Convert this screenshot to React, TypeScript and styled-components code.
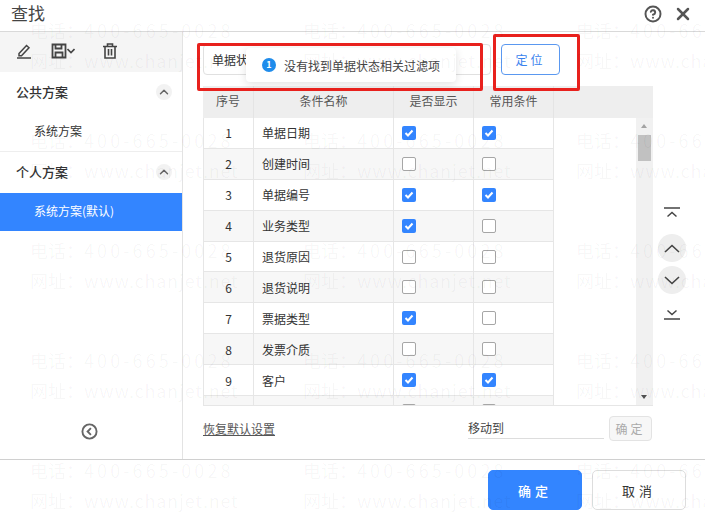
import React from 'react';
import styled, { createGlobalStyle } from 'styled-components';
import { ChevronUp, CircleHelp, X } from 'lucide-react';

const GlobalStyle = createGlobalStyle`
  html, body {
    margin: 0;
    padding: 0;
    background: #fff;
  }
  * {
    box-sizing: border-box;
  }
`;

const Dialog = styled.div`
  position: relative;
  width: 705px;
  height: 519px;
  display: flex;
  flex-direction: column;
  overflow: hidden;
  background: #fff;
  color: #333;
  font-family: 'Noto Sans CJK SC', 'Noto Sans', sans-serif;
  font-size: 12px;
`;

const Header = styled.header`
  height: 32px;
  flex: none;
  display: flex;
  align-items: center;
  justify-content: space-between;
  padding: 0 12px 4px 11px;
  border-bottom: 1px solid #d9d9d9;
`;

const Title = styled.h1`
  margin: -3px 0 0;
  font-size: 17px;
  font-weight: 400;
  color: #444;
`;

const HeaderIcons = styled.div`
  display: flex;
  align-items: center;
  gap: 11px;
  color: #555;
`;

const Body = styled.main`
  flex: 1;
  display: flex;
  min-height: 0;
`;

const Sidebar = styled.aside`
  width: 183px;
  flex: none;
  display: flex;
  flex-direction: column;
  border-right: 1px solid #e3e3e3;
`;

const Tools = styled.div`
  height: 40px;
  flex: none;
  display: flex;
  align-items: center;
  padding: 0 0 2px 16px;
  background: #f5f5f5;
  color: #444;
`;

const ToolSlot = styled.span<{ $width: number }>`
  width: ${(p) => p.$width}px;
  display: flex;
  align-items: center;
`;

const GroupHead = styled.div`
  height: 41px;
  display: flex;
  align-items: center;
  justify-content: space-between;
  padding: 0 10px 2px 16px;
  font-size: 13px;
  font-weight: 500;
  color: #333;
`;

const Collapse = styled.span`
  width: 16px;
  height: 16px;
  border-radius: 50%;
  background: #f2f2f2;
  display: flex;
  align-items: center;
  justify-content: center;
  color: #666;
`;

const PlanItem = styled.div<{ $active?: boolean }>`
  height: 38px;
  display: flex;
  align-items: center;
  padding: 0 0 3px 34px;
  background: ${(p) => (p.$active ? '#3385ff' : 'transparent')};
  color: ${(p) => (p.$active ? '#fff' : '#333')};
`;

const Group = styled.section<{ $line?: boolean }>`
  border-bottom: ${(p) => (p.$line ? '1px solid #eee' : 'none')};
`;

const SideFoot = styled.div`
  margin-top: auto;
  height: 62px;
  display: flex;
  justify-content: center;
  padding-top: 26px;
  padding-right: 4px;
  color: #666;
`;

const Content = styled.div`
  flex: 1;
  display: flex;
  min-width: 0;
`;

const Main = styled.div`
  width: 450px;
  margin-left: 20px;
  display: flex;
  flex-direction: column;
`;

const SearchRow = styled.div`
  height: 54px;
  flex: none;
  display: flex;
  padding-top: 12px;
`;

const SearchInput = styled.div`
  width: 288px;
  height: 31px;
  display: flex;
  align-items: center;
  padding-left: 8px;
  border: 1px solid #e0e0e0;
  border-radius: 4px;
  color: #333;
`;

const LocateButton = styled.button`
  width: 59px;
  height: 31px;
  margin-left: 10px;
  border: 1px solid #5a98f0;
  border-radius: 4px;
  background: #fff;
  color: #3a82ee;
  font: inherit;
  letter-spacing: 3px;
`;

const Table = styled.div`
  width: 450px;
  height: 320px;
  flex: none;
  display: flex;
  flex-direction: column;
  border-bottom: 1px solid #e6e6e6;
`;

const HeadRow = styled.div`
  height: 32px;
  flex: none;
  display: grid;
  grid-template-columns: 51px 140px 80px 80px 1fr;
  background: #eee;
  color: #555;
`;

const HeadCell = styled.div`
  display: flex;
  align-items: center;
  justify-content: center;
  padding-bottom: 3px;
  border-right: 1px solid #e4e4e4;
  &:last-child {
    border-right: none;
  }
`;

const TableBody = styled.div`
  flex: 1;
  display: flex;
  min-height: 0;
  overflow: hidden;
`;

const Rows = styled.div`
  width: 351px;
  flex: none;
  border-left: 1px solid #e6e6e6;
`;

const Row = styled.div<{ $zebra: boolean }>`
  height: 30.9px;
  display: grid;
  grid-template-columns: 50px 140px 80px 80px;
  background: ${(p) => (p.$zebra ? '#f7f7f7' : 'transparent')};
  border-bottom: 1px solid #e6e6e6;
`;

const Cell = styled.div<{ $center?: boolean; $box?: boolean }>`
  display: flex;
  align-items: center;
  justify-content: ${(p) => (p.$center ? 'center' : 'flex-start')};
  padding-left: ${(p) => (p.$box ? '8px' : p.$center ? '0' : '8px')};
  border-right: 1px solid #e6e6e6;
  color: #333;
`;

const Check = styled.span<{ $on: boolean }>`
  width: 14px;
  height: 14px;
  border-radius: 2px;
  display: flex;
  align-items: center;
  justify-content: center;
  background: ${(p) => (p.$on ? '#3385ff' : '#fff')};
  border: ${(p) => (p.$on ? 'none' : '1px solid #a6a6a6')};
`;

const Scrollbar = styled.div`
  width: 17px;
  margin-left: auto;
  position: relative;
  background: #f1f1f1;
`;

const ScrollArrow = styled.span<{ $down?: boolean }>`
  position: absolute;
  left: 5px;
  width: 0;
  height: 0;
  border-left: 3.5px solid transparent;
  border-right: 3.5px solid transparent;
  ${(p) =>
    p.$down
      ? 'bottom: 6px; border-top: 4px solid #505050;'
      : 'top: 6px; border-bottom: 4px solid #a3a3a3;'}
`;

const ScrollThumb = styled.span`
  position: absolute;
  top: 17px;
  left: 2px;
  width: 13px;
  height: 26px;
  background: #c1c1c1;
`;

const BottomRow = styled.div`
  flex: 1;
  display: flex;
  align-items: flex-start;
  padding-top: 10px;
`;

const ResetLink = styled.a`
  color: #555;
  text-decoration: underline;
  line-height: 26px;
`;

const MoveLabel = styled.div`
  width: 136px;
  height: 23px;
  margin-left: auto;
  border-bottom: 1px solid #ddd;
  line-height: 23px;
  color: #444;
`;

const MoveButton = styled.button`
  width: 43px;
  height: 25px;
  margin-left: 5px;
  margin-right: 1px;
  padding: 0;
  border: 1px solid #e3e3e3;
  border-radius: 4px;
  background: #f7f7f7;
  color: #aaa;
  font: inherit;
  letter-spacing: 3px;
  white-space: nowrap;
`;

const Mover = styled.div`
  flex: 1;
  display: flex;
  flex-direction: column;
  align-items: center;
  padding: 171px 14px 0 0;
  color: #444;
`;

const MoveStep = styled.span<{ $round?: boolean; $after: number }>`
  width: 28px;
  height: ${(p) => (p.$round ? 28 : 20)}px;
  margin-bottom: ${(p) => p.$after}px;
  border-radius: 50%;
  display: flex;
  align-items: center;
  justify-content: center;
  background: ${(p) => (p.$round ? '#eee' : 'transparent')};
`;

const Footer = styled.footer`
  height: 60px;
  flex: none;
  display: flex;
  justify-content: flex-end;
  gap: 10px;
  padding: 10px 19px 0 0;
  border-top: 1px solid #d0d0d0;
`;

const FooterButton = styled.button<{ $primary?: boolean }>`
  width: 94px;
  height: 40px;
  border-radius: 5px;
  border: 1px solid ${(p) => (p.$primary ? '#3385ff' : '#ddd')};
  background: ${(p) => (p.$primary ? '#3385ff' : '#fff')};
  color: ${(p) => (p.$primary ? '#fff' : '#333')};
  font: inherit;
  font-size: 13px;
  font-weight: ${(p) => (p.$primary ? 500 : 400)};
  letter-spacing: 4px;
`;

const Toast = styled.div`
  position: absolute;
  top: 48px;
  left: 246px;
  width: 210px;
  height: 34px;
  display: flex;
  align-items: center;
  gap: 8px;
  padding-left: 16px;
  background: #fff;
  border-radius: 4px;
  box-shadow: 0 2px 8px rgba(0, 0, 0, 0.12);
  color: #444;
`;

const ToastBadge = styled.span`
  width: 14px;
  height: 14px;
  flex: none;
  border-radius: 50%;
  background: #1f8ceb;
  color: #fff;
  font-size: 9px;
  font-weight: 700;
  line-height: 14px;
  text-align: center;
`;

const Marker = styled.div<{ $x: number; $y: number; $w: number; $h: number }>`
  position: absolute;
  left: ${(p) => p.$x}px;
  top: ${(p) => p.$y}px;
  width: ${(p) => p.$w}px;
  height: ${(p) => p.$h}px;
  border: 3px solid #e8211d;
  border-radius: 2px;
  pointer-events: none;
`;

const Watermark = styled.div`
  position: absolute;
  inset: 0;
  display: grid;
  grid-template-columns: repeat(3, 273px);
  grid-auto-rows: 110px;
  padding: 15px 0 0 30px;
  pointer-events: none;
  color: rgba(0, 0, 0, 0.04);
  font-size: 18px;
  line-height: 30px;
  white-space: nowrap;
`;

const Phone = styled.span`
  letter-spacing: 3.1px;
`;

const Site = styled.span`
  letter-spacing: 0.8px;
`;

const rows = [
  { name: '单据日期', show: true, common: true },
  { name: '创建时间', show: false, common: false },
  { name: '单据编号', show: true, common: true },
  { name: '业务类型', show: true, common: false },
  { name: '退货原因', show: false, common: false },
  { name: '退货说明', show: false, common: false },
  { name: '票据类型', show: true, common: false },
  { name: '发票介质', show: false, common: false },
  { name: '客户', show: true, common: true },
  { name: '', show: false, common: false },
];

const CheckBox = ({ on }: { on: boolean }) => (
  <Check $on={on}>
    {on && (
      <svg width="10" height="10" viewBox="0 0 10 10" fill="none" stroke="#fff" strokeWidth="2">
        <path d="M1.500 5l2.500 2.500L8.500 2.500" />
      </svg>
    )}
  </Check>
);

const App: React.FC = () => (
  <Dialog>
    <GlobalStyle />
    <Header>
      <Title>查找</Title>
      <HeaderIcons>
        <CircleHelp size={18} strokeWidth={2.6} />
        <X size={20} strokeWidth={3} />
      </HeaderIcons>
    </Header>
    <Body>
      <Sidebar>
        <Tools>
          <ToolSlot $width={35}>
            <svg width="16" height="16" viewBox="0 0 16 16" fill="none" stroke="#444" strokeWidth="1.5">
              <path d="M3 10.500L10.500 2.500l2.500 2.300-7.500 8H3z" />
              <path d="M1 15h14" />
            </svg>
          </ToolSlot>
          <ToolSlot $width={51}>
            <svg width="16" height="16" viewBox="0 0 16 16" fill="none" stroke="#444" strokeWidth="1.8">
              <path d="M1.500 1.500h13v13h-13z" />
              <path d="M4.500 1.500v4h6v-4M4.500 14.500v-5h7v5" />
            </svg>
            <svg width="8" height="6" viewBox="0 0 8 6" fill="none" stroke="#444" strokeWidth="1.6">
              <path d="M0.500 1l3.500 3.500L7.500 1" />
            </svg>
          </ToolSlot>
          <ToolSlot $width={16}>
            <svg width="16" height="16" viewBox="0 0 16 16" fill="none" stroke="#444" strokeWidth="1.6">
              <path d="M1 3.500h14M5.500 3.500V1h5v2.500M3 3.500V15h10V3.500M6.500 6v6.500M9.500 6v6.500" />
            </svg>
          </ToolSlot>
        </Tools>
        <Group $line>
          <GroupHead>
            公共方案
            <Collapse>
              <ChevronUp size={14} strokeWidth={2.5} />
            </Collapse>
          </GroupHead>
          <PlanItem>系统方案</PlanItem>
        </Group>
        <Group>
          <GroupHead>
            个人方案
            <Collapse>
              <ChevronUp size={14} strokeWidth={2.5} />
            </Collapse>
          </GroupHead>
          <PlanItem $active>系统方案(默认)</PlanItem>
        </Group>
        <SideFoot>
          <svg width="17" height="17" viewBox="0 0 18 18" fill="none" stroke="#666" strokeWidth="2">
            <circle cx="9" cy="9" r="7.500" />
            <path d="M10.500 5.500L7 9l3.500 3.500" />
          </svg>
        </SideFoot>
      </Sidebar>
      <Content>
        <Main>
          <SearchRow>
            <SearchInput>单据状态</SearchInput>
            <LocateButton>定位</LocateButton>
          </SearchRow>
          <Table>
            <HeadRow>
              <HeadCell>序号</HeadCell>
              <HeadCell>条件名称</HeadCell>
              <HeadCell>是否显示</HeadCell>
              <HeadCell>常用条件</HeadCell>
              <HeadCell />
            </HeadRow>
            <TableBody>
              <Rows>
                {rows.map((row, i) => (
                  <Row key={i} $zebra={i % 2 === 1}>
                    <Cell $center>{i + 1}</Cell>
                    <Cell>{row.name}</Cell>
                    <Cell $box>
                      <CheckBox on={row.show} />
                    </Cell>
                    <Cell $box>
                      <CheckBox on={row.common} />
                    </Cell>
                  </Row>
                ))}
              </Rows>
              <Scrollbar>
                <ScrollArrow />
                <ScrollThumb />
                <ScrollArrow $down />
              </Scrollbar>
            </TableBody>
          </Table>
          <BottomRow>
            <ResetLink>恢复默认设置</ResetLink>
            <MoveLabel>移动到</MoveLabel>
            <MoveButton>确定</MoveButton>
          </BottomRow>
        </Main>
        <Mover>
          <MoveStep $after={11}>
            <svg width="16" height="12" viewBox="0 0 16 12" fill="none" stroke="#444" strokeWidth="1.500">
              <path d="M0 1h16M3.500 9.500L8 5.500l4.500 4" />
            </svg>
          </MoveStep>
          <MoveStep $round $after={4}>
            <svg width="16" height="9" viewBox="0 0 16 9" fill="none" stroke="#444" strokeWidth="1.600">
              <path d="M1 8l7-6.500L15 8" />
            </svg>
          </MoveStep>
          <MoveStep $round $after={10}>
            <svg width="16" height="9" viewBox="0 0 16 9" fill="none" stroke="#444" strokeWidth="1.600">
              <path d="M1 1l7 6.500L15 1" />
            </svg>
          </MoveStep>
          <MoveStep $after={0}>
            <svg width="16" height="12" viewBox="0 0 16 12" fill="none" stroke="#444" strokeWidth="1.500">
              <path d="M0 11h16M3.500 2.500L8 6.500l4.500-4" />
            </svg>
          </MoveStep>
        </Mover>
      </Content>
    </Body>
    <Footer>
      <FooterButton $primary>确定</FooterButton>
      <FooterButton>取消</FooterButton>
    </Footer>

    <Toast>
      <ToastBadge>1</ToastBadge>
      没有找到单据状态相关过滤项
    </Toast>
    <Marker $x={197} $y={43} $w={286} $h={48} />
    <Marker $x={493} $y={34} $w={87} $h={57} />
    <Watermark>
      {Array.from({ length: 15 }).map((_, i) => (
        <div key={i}>
          电话：<Phone>400-665-0028</Phone>
          <br />
          网址：<Site>www.chanjet.net</Site>
        </div>
      ))}
    </Watermark>
  </Dialog>
);

export default App;
